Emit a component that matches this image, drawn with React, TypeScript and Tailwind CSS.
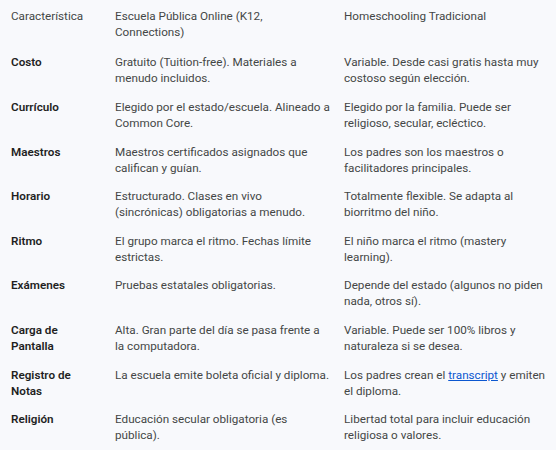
import React from 'react';

interface Row {
  label: string;
  online: React.ReactNode;
  home: React.ReactNode;
}

const rows: Row[] = [
  {
    label: 'Costo',
    online: 'Gratuito (Tuition-free). Materiales a menudo incluidos.',
    home: 'Variable. Desde casi gratis hasta muy costoso según elección.',
  },
  {
    label: 'Currículo',
    online: 'Elegido por el estado/escuela. Alineado a Common Core.',
    home: 'Elegido por la familia. Puede ser religioso, secular, ecléctico.',
  },
  {
    label: 'Maestros',
    online: 'Maestros certificados asignados que califican y guían.',
    home: 'Los padres son los maestros o facilitadores principales.',
  },
  {
    label: 'Horario',
    online: 'Estructurado. Clases en vivo (sincrónicas) obligatorias a menudo.',
    home: 'Totalmente flexible. Se adapta al biorritmo del niño.',
  },
  {
    label: 'Ritmo',
    online: 'El grupo marca el ritmo. Fechas límite estrictas.',
    home: 'El niño marca el ritmo (mastery learning).',
  },
  {
    label: 'Exámenes',
    online: 'Pruebas estatales obligatorias.',
    home: 'Depende del estado (algunos no piden nada, otros sí).',
  },
  {
    label: 'Carga de Pantalla',
    online: 'Alta. Gran parte del día se pasa frente a la computadora.',
    home: 'Variable. Puede ser 100% libros y naturaleza si se desea.',
  },
  {
    label: 'Registro de Notas',
    online: 'La escuela emite boleta oficial y diploma.',
    home: (
      <>
        Los padres crean el{' '}
        <a href="#" className="text-[#0b57d0] underline">
          transcript
        </a>{' '}
        y emiten el diploma.
      </>
    ),
  },
  {
    label: 'Religión',
    online: 'Educación secular obligatoria (es pública).',
    home: 'Libertad total para incluir educación religiosa o valores.',
  },
];

const App: React.FC = () => {
  return (
    <div className="w-[556px] h-[463px] bg-white font-['Roboto',sans-serif] text-[11.7px] leading-[16px] text-[#444746]">
      <div className="bg-[#f8f9fc] pt-[1.5px] pb-[1px] pr-[3px]">
        {/* Header */}
        <div className="flex pb-[2px]">
          <div className="w-[104px] pl-[11px] pr-[6px] py-[6.3px]">Característica</div>
          <div className="w-[229px] pl-[11px] pr-[2px] py-[6.3px]">Escuela Pública Online (K12, Connections)</div>
          <div className="flex-1 pl-[11px] pr-[6px] py-[6.3px]">Homeschooling Tradicional</div>
        </div>

        {/* Rows */}
        {rows.map((row) => (
          <div key={row.label} className="flex">
            <div className="w-[104px] pl-[11px] pr-[6px] py-[6.3px] font-semibold text-[#1f1f1f]">
              {row.label}
            </div>
            <div className="w-[229px] pl-[11px] pr-[2px] py-[6.3px]">{row.online}</div>
            <div className="flex-1 pl-[11px] pr-[6px] py-[6.3px]">{row.home}</div>
          </div>
        ))}
      </div>
    </div>
  );
};

export default App;
